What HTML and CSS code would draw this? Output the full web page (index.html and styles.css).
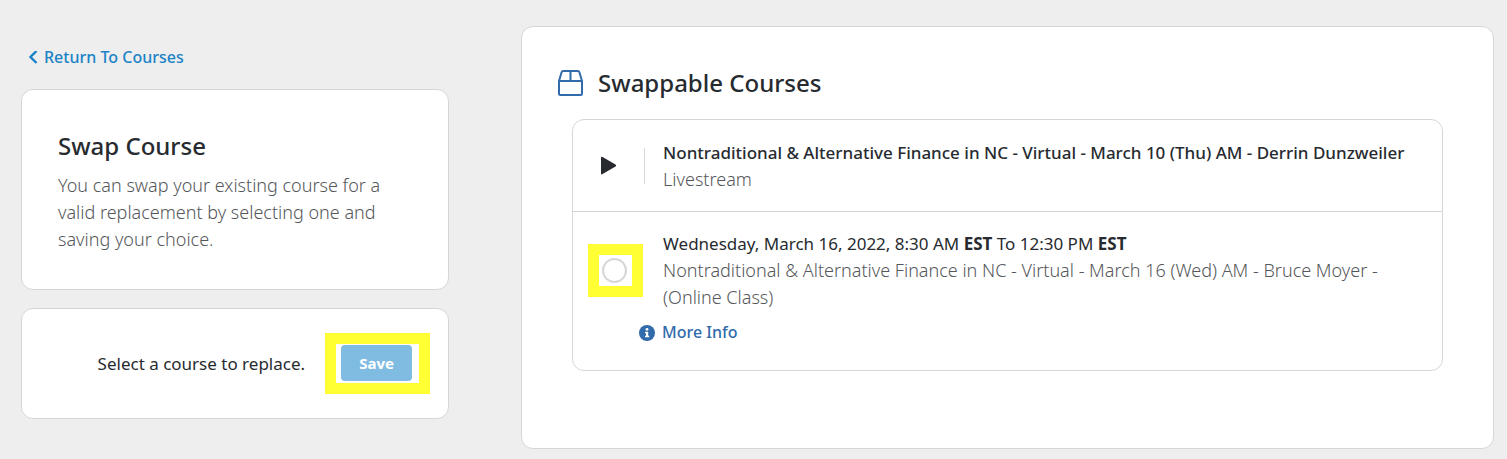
FILE: index.html
```
<!DOCTYPE html>
<html lang="en">
  <head>
    <meta charset="utf-8">
    <meta name="viewport" content="width=device-width, initial-scale=1.0">
    <title>Swap Course</title>
    <link rel="stylesheet" href="styles.css">
  </head>
  <body>
    <main class="page">
      <aside class="sidebar">
        <a class="back-link" href="#courses">
          <svg class="back-icon" viewBox="0 0 10 14" aria-hidden="true">
            <path d="M8.5 0 2.5 6l6 6" fill="none" stroke="currentColor" stroke-width="2.4"/>
          </svg>
          Return To Courses
        </a>

        <section class="card intro">
          <h1 class="title">Swap Course</h1>
          <p class="intro-text muted">You can swap your existing course for a valid replacement by selecting one and saving your choice.</p>
        </section>

        <section class="card save-bar">
          <span>Select a course to replace.</span>
          <span class="highlight highlight-save">
            <button class="save" type="button">Save</button>
          </span>
        </section>
      </aside>

      <section class="card courses" id="courses">
        <header class="courses-header">
          <svg class="box-icon" viewBox="0 0 26 26" aria-hidden="true">
            <g fill="none" stroke="currentColor" stroke-width="2" stroke-linejoin="round">
              <path d="M1 11 3.6 2.2Q4 1 5.2 1h14.600q1.200 0 1.600 1.200L24 11v12.500q0 1.500-1.500 1.500h-20Q1 25 1 23.500z"/>
              <path d="M1 11h23M12.500 1v10"/>
            </g>
          </svg>
          <h2 class="title">Swappable Courses</h2>
        </header>

        <ul class="course-list">
          <li class="course">
            <div class="row">
              <span class="media">
                <svg class="play-icon" viewBox="0 1 17 20" aria-hidden="true">
                  <path d="M1 3Q1 1.200 2.600 2.100L15.500 9.600q1.400 1 0 2L2.600 19.100Q1 20 1 18.200z" fill="currentColor"/>
                </svg>
              </span>
              <div class="details">
                <h3 class="course-name">Nontraditional &amp; Alternative Finance in NC - Virtual - March 10 (Thu) AM - Derrin Dunzweiler</h3>
                <p class="muted">Livestream</p>
              </div>
            </div>
          </li>
          <li class="course">
            <div class="row">
              <span class="choice">
                <span class="highlight highlight-radio">
                  <input class="radio" type="radio" name="course" id="course-mar-16">
                </span>
              </span>
              <label class="details" for="course-mar-16">
                <span class="when">Wednesday, March 16, 2022, 8:30 AM <b>EST</b> To 12:30 PM <b>EST</b></span>
                <span class="muted">Nontraditional &amp; Alternative Finance in NC - Virtual - March 16 (Wed) AM - Bruce Moyer - (Online Class)</span>
              </label>
            </div>
            <a class="more-info" href="#more-info">
              <svg class="info-icon" viewBox="0 0 16 16" aria-hidden="true">
                <circle cx="8" cy="8" r="8" fill="currentColor"/>
                <circle cx="8" cy="4.300" r="1.400" fill="#fff"/>
                <path d="M6 6.700h3.200v4.100h1v1.500H6v-1.500h1V8.200H6z" fill="#fff"/>
              </svg>
              More Info
            </a>
          </li>
        </ul>
      </section>
    </main>
  </body>
</html>
```
FILE: styles.css
```
* {
  box-sizing: border-box;
}
body {
  margin: 0;
  background: #eee;
  color: #272b30;
  font: 17px/27px "Noto Sans", "Open Sans", sans-serif;
}
h1, h2, h3, p, ul {
  margin: 0;
  padding: 0;
}
a {
  text-decoration: none;
  font-size: 16px;
  font-weight: 500;
}
svg {
  flex: none;
}
.page {
  display: grid;
  grid-template-columns: minmax(0, 11fr) minmax(0, 25fr);
  gap: 72px;
  padding: 26px 13px 10px 21px;
}
.card {
  background: #fff;
  border: 1px solid #d5d6d7;
  border-radius: 12px;
}
.title {
  font-size: 24px;
  line-height: 36px;
  font-weight: 500;
}
.sidebar {
  display: flex;
  flex-direction: column;
  align-items: stretch;
  gap: 18px;
  padding-top: 18px;
}
.back-link {
  display: flex;
  align-items: center;
  align-self: flex-start;
  gap: 6px;
  padding-left: 7px;
  color: #1c82c6;
}
.back-icon {
  width: 10px;
  height: 14px;
}
.intro {
  padding: 38px 36px 36px;
}
.intro-text {
  padding-top: 8px;
}
.save-bar {
  display: flex;
  align-items: center;
  justify-content: flex-end;
  gap: 20px;
  padding: 24px 18px;
}
.highlight {
  display: flex;
  border: 11px solid #ffff33;
}
.highlight-save {
  padding: 1px 7px 2px 5px;
}
.highlight-radio {
  width: 55px;
  padding: 3px 5px 3px 3px;
}
.save {
  width: 71px;
  height: 36px;
  padding: 0;
  border: 0;
  border-radius: 4px;
  background: #80bce2;
  color: #fff;
  font: 700 15px/36px "Noto Sans", "Open Sans", sans-serif;
}
.courses {
  padding: 38px 50px 77px;
}
.courses-header {
  display: flex;
  align-items: center;
  gap: 14px;
  margin-left: -14px;
}
.box-icon {
  width: 26px;
  height: 26px;
  color: #316bab;
}
.course-list {
  margin-top: 18px;
  border: 1px solid #d5d6d7;
  border-radius: 12px;
  list-style: none;
}
.course {
  padding: 19px 18px 18px 0;
}
.course + .course {
  padding: 18px 18px 22px 0;
  border-top: 1px solid #d5d6d7;
}
.row {
  display: flex;
  align-items: center;
}
.media {
  display: flex;
  align-items: center;
  justify-content: center;
  flex: none;
  width: 72px;
  height: 36px;
  margin-right: 18px;
  border-right: 1px solid #d5d6d7;
}
.play-icon {
  width: 17px;
  height: 20px;
}
.choice {
  flex: none;
  width: 90px;
  padding-left: 15px;
}
.radio {
  appearance: none;
  width: 25px;
  height: 25px;
  margin: 0;
  border: 2px solid #d5d6d7;
  border-radius: 50%;
}
.radio:checked {
  border: 8px solid #316bab;
}
.course-name {
  font-size: 17px;
  font-weight: 500;
}
.when {
  display: block;
}
.muted {
  display: block;
  color: #55575a;
  font-size: 18px;
  font-weight: 300;
}
.more-info {
  display: inline-flex;
  align-items: center;
  gap: 7px;
  margin: 8px 0 0 66px;
  color: #316bab;
}
.info-icon {
  width: 16px;
  height: 16px;
}
```
